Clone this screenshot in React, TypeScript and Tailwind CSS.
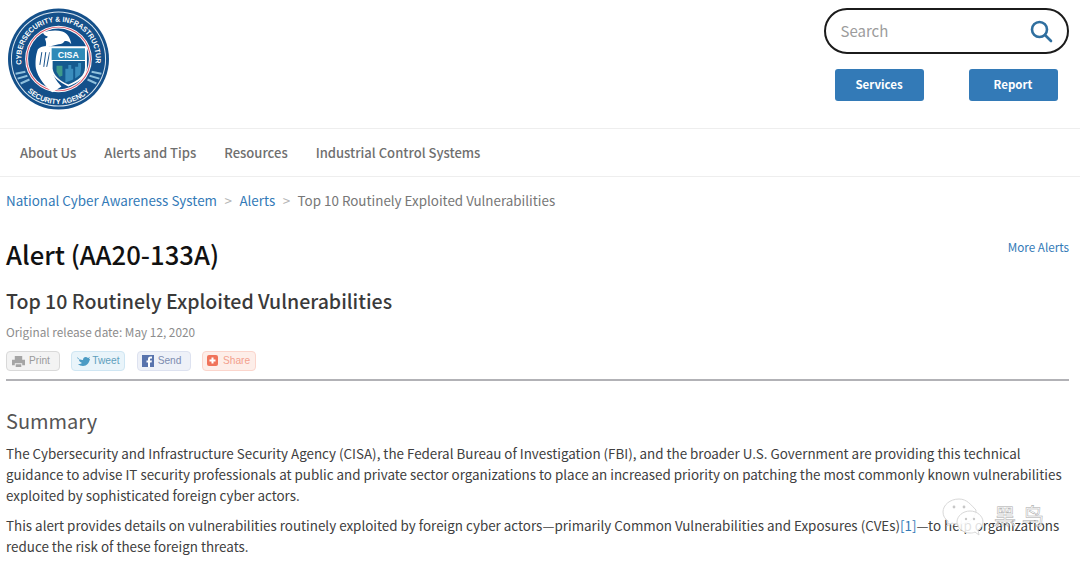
import React from 'react';

const navItems = ['About Us', 'Alerts and Tips', 'Resources', 'Industrial Control Systems'];

const Logo = () => (
  <svg width="103" height="102" viewBox="0 0 104 104" aria-hidden="true">
    <circle cx="52" cy="52" r="51.5" fill="#14508a" />
    <circle cx="52" cy="52" r="48.5" fill="#dbe7f0" />
    <circle cx="52" cy="52" r="47.5" fill="#14508a" />
    <circle cx="52" cy="52" r="34" fill="#fff" />
    <circle cx="52" cy="52" r="33" fill="#d9566a" />
    <circle cx="52" cy="52" r="32" fill="#fff" />
    <circle cx="52" cy="52" r="31" fill="#0f4f8c" />
    <defs>
      <path id="logoTop" d="M14.6 58.6 A38 38 0 1 1 89.4 58.6" />
      <path id="logoBottom" d="M19.5 84.5 A46 46 0 0 0 84.5 84.5" />
    </defs>
    <text fill="#fff" fontSize="7.5" fontWeight="700" fontFamily="Liberation Sans, sans-serif" textLength="134" lengthAdjust="spacingAndGlyphs">
      <textPath href="#logoTop" startOffset="1">CYBERSECURITY &amp; INFRASTRUCTURE</textPath>
    </text>
    <text fill="#fff" fontSize="7.5" fontWeight="700" fontFamily="Liberation Sans, sans-serif" textLength="70" lengthAdjust="spacingAndGlyphs">
      <textPath href="#logoBottom" startOffset="1">SECURITY AGENCY</textPath>
    </text>
    <path d="M8 66l10-2 .5 2-10 2zM10 71l10-3 .6 2-10 3zM13 76l9-4 .8 2-9 4zM96 66l-10-2-.5 2 10 2zM94 71l-10-3-.6 2 10 3zM91 76l-9-4-.8 2 9 4z" fill="#8fc0dc" />
    {/* eagle head */}
    <path d="M36 25c6-2 14-3 20-1 5 2 8 6 9 13-2-3-5-4-7-3-1 2-3 3-6 3l-8 2-5 0c1-3 0-6-1-8 2 0 3-1 3-2-2 0-4-2-5-4z" fill="#fff" />
    {/* arm */}
    <path d="M31 42c3-3 8-4 12-3 4 1 5 4 3 8l-1 12c0 8 4 15 10 21l-9 6c-7-5-15-15-17-24-1-7 0-15 2-20z" fill="#fff" />
    <path d="M35 45l-2 13M39 45l-2 15M43 45l-3 15" stroke="#14508a" strokeWidth="1" />
    {/* shield */}
    <path d="M43 39h38v22c0 9-8 15-19 19-9-4-17-10-19-19z" fill="#fff" />
    <path d="M45 41h34v12H45z" fill="#2f8ab8" />
    <path d="M46 54h33v7c0 8-7 13-17 17-8-3-15-9-16-16z" fill="#155a8f" />
    <path d="M50 59h6v10l-3 1-3-5z" fill="#3f9a8a" />
    <path d="M59 62h3v-4h3v4h2v11l-8 3zM69 60h3v-4h3v6l-1 6-5 4z" fill="#3a8dbd" />
    <text x="62" y="50.5" textAnchor="middle" fill="#fff" fontSize="9" fontWeight="700" fontFamily="Liberation Sans, sans-serif">CISA</text>
  </svg>
);

const ShareButton = ({ label, icon, box, text, labelGap }: { label: string; icon: React.ReactNode; box: string; text: string; labelGap: string }) => (
  <div className={`flex h-5 w-[54px] items-center rounded-sm border pl-1 font-['Liberation_Sans',sans-serif] text-[10.2px] ${box} ${text}`}>
    <span className="flex w-[15px] shrink-0 items-center">{icon}</span>
    <span className={labelGap}>{label}</span>
  </div>
);

const App = () => {
  return (
    <div className="relative h-[566px] w-[1080px] overflow-hidden bg-white font-['Noto_Sans_CJK_SC','Noto_Sans',sans-serif] text-[#404040]">
      <header className="flex h-[129px] justify-between border-b border-[#eeeeee] pl-[7px] pr-[17px] pt-2">
        <Logo />
        <div className="flex w-[234px] flex-col items-center">
          <div className="flex h-[46px] w-[245px] shrink-0 items-center justify-between rounded-[23px] border-2 border-[#1b1b1b] pl-[15px] pr-[14px]">
            <span className="text-[15px] text-[#9c9c9c]">Search</span>
            <svg width="24" height="24" viewBox="0 0 24 24" fill="none" stroke="#2f6f9f" strokeWidth="2.6" strokeLinecap="round">
              <circle cx="10.5" cy="10.5" r="7.5" />
              <path d="M16 16l6 6" />
            </svg>
          </div>
          <div className="mt-[15px] flex w-[223px] justify-between">
            <div className="flex h-8 w-[89px] items-center justify-center rounded-[3px] bg-[#337ab7] text-[11.5px] font-bold text-white">Services</div>
            <div className="flex h-8 w-[89px] items-center justify-center rounded-[3px] bg-[#337ab7] text-[11.5px] font-bold text-white">Report</div>
          </div>
        </div>
      </header>

      <nav className="flex h-12 items-center gap-7 border-b border-[#eeeeee] pl-5 text-[13.05px] font-medium text-[#6f6f6f]">
        {navItems.map((item) => (
          <span key={item}>{item}</span>
        ))}
      </nav>

      <div className="flex h-12 items-center pb-0.5 pl-1.5 text-[13.4px]">
        <span className="text-[#337ab7]">National Cyber Awareness System</span>
        <span className="mx-[7.5px] text-[#b5b5b5]">&gt;</span>
        <span className="text-[#337ab7]">Alerts</span>
        <span className="mx-[7.5px] text-[#b5b5b5]">&gt;</span>
        <span className="text-[#777777]">Top 10 Routinely Exploited Vulnerabilities</span>
      </div>

      <div className="px-1.5">
        <div className="mt-[11px] flex items-start justify-between pr-[5px]">
          <h1 className="text-[25.7px] font-medium leading-[36px] text-[#111111]">Alert (AA20-133A)</h1>
          <a className="pt-[1px] text-[11.7px] leading-5 text-[#337ab7]">More Alerts</a>
        </div>
        <h2 className="mt-[14px] text-[19.55px] font-medium leading-[30px] text-[#3a3a3a]">Top 10 Routinely Exploited Vulnerabilities</h2>
        <p className="mt-[7px] text-[11.8px] leading-[18px] text-[#8c8c8c]">Original release date: May 12, 2020</p>

        <div className="mt-[10px] flex gap-[11.34px]">
          <ShareButton
            label="Print"
            labelGap="ml-[3px]"
            box="border-[#d9d9d9] bg-[#f3f3f3]"
            text="text-[#9a9a9a]"
            icon={
              <svg width="15" height="13" viewBox="0 0 16 14">
                <path d="M4 1h8v4H4zM1 5h14v6h-3V9H4v2H1zM5 10h6v3H5z" fill="#a5a5a5" />
              </svg>
            }
          />
          <ShareButton
            label="Tweet"
            labelGap="ml-[1px]"
            box="border-[#cfe6f3] bg-[#e9f4fa]"
            text="text-[#5f9fbd]"
            icon={
              <svg width="14" height="12" viewBox="0 0 14 12">
                <path d="M1 2c2 2 3 3 6 3 0-3 3-4 5-2l2-1-1 2 1 0c-1 4-3 7-7 7-2 0-4-1-5-2 1 0 3 0 4-1-2-1-3-2-3-3h1C2 4 1 3 1 2z" fill="#4c9bc4" />
              </svg>
            }
          />
          <ShareButton
            label="Send"
            labelGap="ml-[1px]"
            box="border-[#dde2f0] bg-[#eef1f8]"
            text="text-[#7d8cb0]"
            icon={
              <svg width="12" height="12" viewBox="0 0 12 12">
                <rect width="12" height="12" fill="#5873ad" />
                <path d="M8 12V7.5h1.5L10 5.5H8V4.5c0-.6.2-1 1-1h1V1.6H8.5C6.8 1.6 6 2.6 6 4.2v1.3H4.5v2H6V12z" fill="#fff" />
              </svg>
            }
          />
          <ShareButton
            label="Share"
            labelGap="ml-[1px]"
            box="border-[#fbd5cc] bg-[#fdeee9]"
            text="text-[#f3a08d]"
            icon={
              <svg width="12" height="12" viewBox="0 0 12 12">
                <rect width="11" height="11" rx="2" fill="#f0735a" />
                <path d="M4.5 2.5h2v2h2v2h-2v2h-2v-2h-2v-2h2z" fill="#fff" />
              </svg>
            }
          />
        </div>

        <div className="mr-[5px] mt-2 h-0.5 bg-[#b2b2b6]" />

        <h3 className="mt-[25px] text-[20px] leading-[30px] text-[#555555]">Summary</h3>
        <p className="mt-[7px] w-[1064px] text-[13.4px] leading-[21px] text-[#404040]">
          The Cybersecurity and Infrastructure Security Agency (CISA), the Federal Bureau of Investigation (FBI), and the broader U.S. Government are providing this technical guidance to advise IT security professionals at public and private sector organizations to place an increased priority on patching the most commonly known vulnerabilities exploited by sophisticated foreign cyber actors.
        </p>
        <p className="mt-[9px] w-[1064px] text-[13.4px] leading-[21px] text-[#404040]">
          This alert provides details on vulnerabilities routinely exploited by foreign cyber actors—primarily Common Vulnerabilities and Exposures (CVEs)
          <span className="text-[#337ab7]">[1]</span>—to help organizations reduce the risk of these foreign threats.
        </p>
      </div>

      <div className="absolute left-[942px] top-[498px] flex items-start">
        <svg width="44" height="40" viewBox="0 0 44 40" fill="none">
          <path d="M17 1C8 1 1 7 1 14c0 4 2 7 5 9l-1 5 5-3c2 1 4 1 7 1 5 0 10-2 13-5 3-3 4-6 4-9C29 7 25 1 17 1z" fill="#ffffff" fillOpacity="0.8" stroke="#d8d8d8" />
          <path d="M28 13c-7 0-13 5-13 11s6 11 13 11c2 0 3 0 5-1l4 3-1-5c3-2 5-5 5-8 0-6-6-11-13-11z" fill="#ffffff" fillOpacity="0.85" stroke="#d8d8d8" />
          <circle cx="12" cy="9" r="1.4" fill="#c8c8c8" />
          <circle cx="22" cy="9" r="1.4" fill="#c8c8c8" />
          <circle cx="24" cy="21" r="1.2" fill="#c8c8c8" />
          <circle cx="32" cy="21" r="1.2" fill="#c8c8c8" />
        </svg>
        <span className="ml-2 mt-1 text-[22px] leading-6 tracking-[6px] text-white/70 [-webkit-text-stroke:0.5px_#a8a8a8]">黑鸟</span>
      </div>
    </div>
  );
};

export default App;
